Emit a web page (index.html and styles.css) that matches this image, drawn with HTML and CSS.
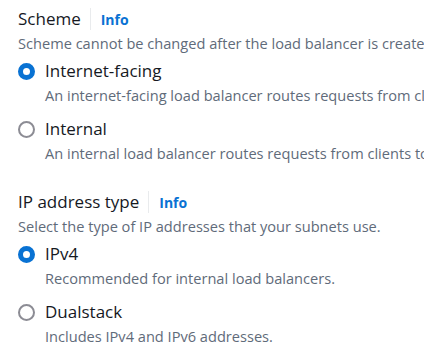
FILE: index.html
```html
<!DOCTYPE html>
<html>
<head>
<meta charset="utf-8">
<link rel="stylesheet" href="styles.css">
</head>
<body>
<div class="page">
  <section class="field">
    <div class="field-head">
      <span class="field-title">Scheme</span>
      <span class="divider"></span>
      <a class="info">Info</a>
    </div>
    <p class="field-desc">Scheme cannot be changed after the load balancer is created.</p>
    <div class="radio-group">
      <div class="radio">
        <span class="dot checked"></span>
        <div class="radio-text">
          <div class="radio-label">Internet-facing</div>
          <div class="radio-desc">An internet-facing load balancer routes requests from clients over the internet to targets.</div>
        </div>
      </div>
      <div class="radio">
        <span class="dot"></span>
        <div class="radio-text">
          <div class="radio-label">Internal</div>
          <div class="radio-desc">An internal load balancer routes requests from clients to targets using private IP addresses.</div>
        </div>
      </div>
    </div>
  </section>
  <section class="field">
    <div class="field-head">
      <span class="field-title">IP address type</span>
      <span class="divider"></span>
      <a class="info">Info</a>
    </div>
    <p class="field-desc">Select the type of IP addresses that your subnets use.</p>
    <div class="radio-group">
      <div class="radio">
        <span class="dot checked"></span>
        <div class="radio-text">
          <div class="radio-label">IPv4</div>
          <div class="radio-desc">Recommended for internal load balancers.</div>
        </div>
      </div>
      <div class="radio">
        <span class="dot"></span>
        <div class="radio-text">
          <div class="radio-label">Dualstack</div>
          <div class="radio-desc">Includes IPv4 and IPv6 addresses.</div>
        </div>
      </div>
    </div>
  </section>
</div>
</body>
</html>
```

FILE: styles.css
```css
html, body {
  margin: 0;
  padding: 0;
  background: #ffffff;
}
body {
  font-family: "Open Sans", "Noto Sans", sans-serif;
  color: #16191f;
  overflow: hidden;
  width: 424px;
  height: 358px;
}
.page {
  width: 406px;
  overflow: hidden;
  padding: 6px 0 0 18px;
  display: flex;
  flex-direction: column;
  gap: 24px;
  white-space: nowrap;
}
.field {
  display: flex;
  flex-direction: column;
}
.field-head {
  display: flex;
  align-items: center;
  height: 26px;
}
.field-title {
  font-size: 17px;
  line-height: 26px;
}
.divider {
  width: 1px;
  height: 22px;
  background: #e9ebed;
  margin: 0 10px 0 9px;
}
.info {
  font-size: 14px;
  font-weight: 700;
  color: #0972d3;
}
.field-desc {
  margin: 0;
  font-size: 14.6px;
  line-height: 22px;
  color: #5f6b7a;
}
.radio-group {
  display: flex;
  flex-direction: column;
  gap: 10px;
  margin-top: 5px;
}
.radio {
  display: flex;
  gap: 10px;
  align-items: flex-start;
}
.dot {
  flex: none;
  box-sizing: border-box;
  width: 17px;
  height: 17px;
  border-radius: 50%;
  border: 2px solid #8c8c94;
  margin-top: 4px;
}
.dot.checked {
  border: 5px solid #0972d3;
}
.radio-label {
  font-size: 17px;
  line-height: 24px;
}
.radio-desc {
  font-size: 14.6px;
  line-height: 24px;
  color: #5f6b7a;
}
```
